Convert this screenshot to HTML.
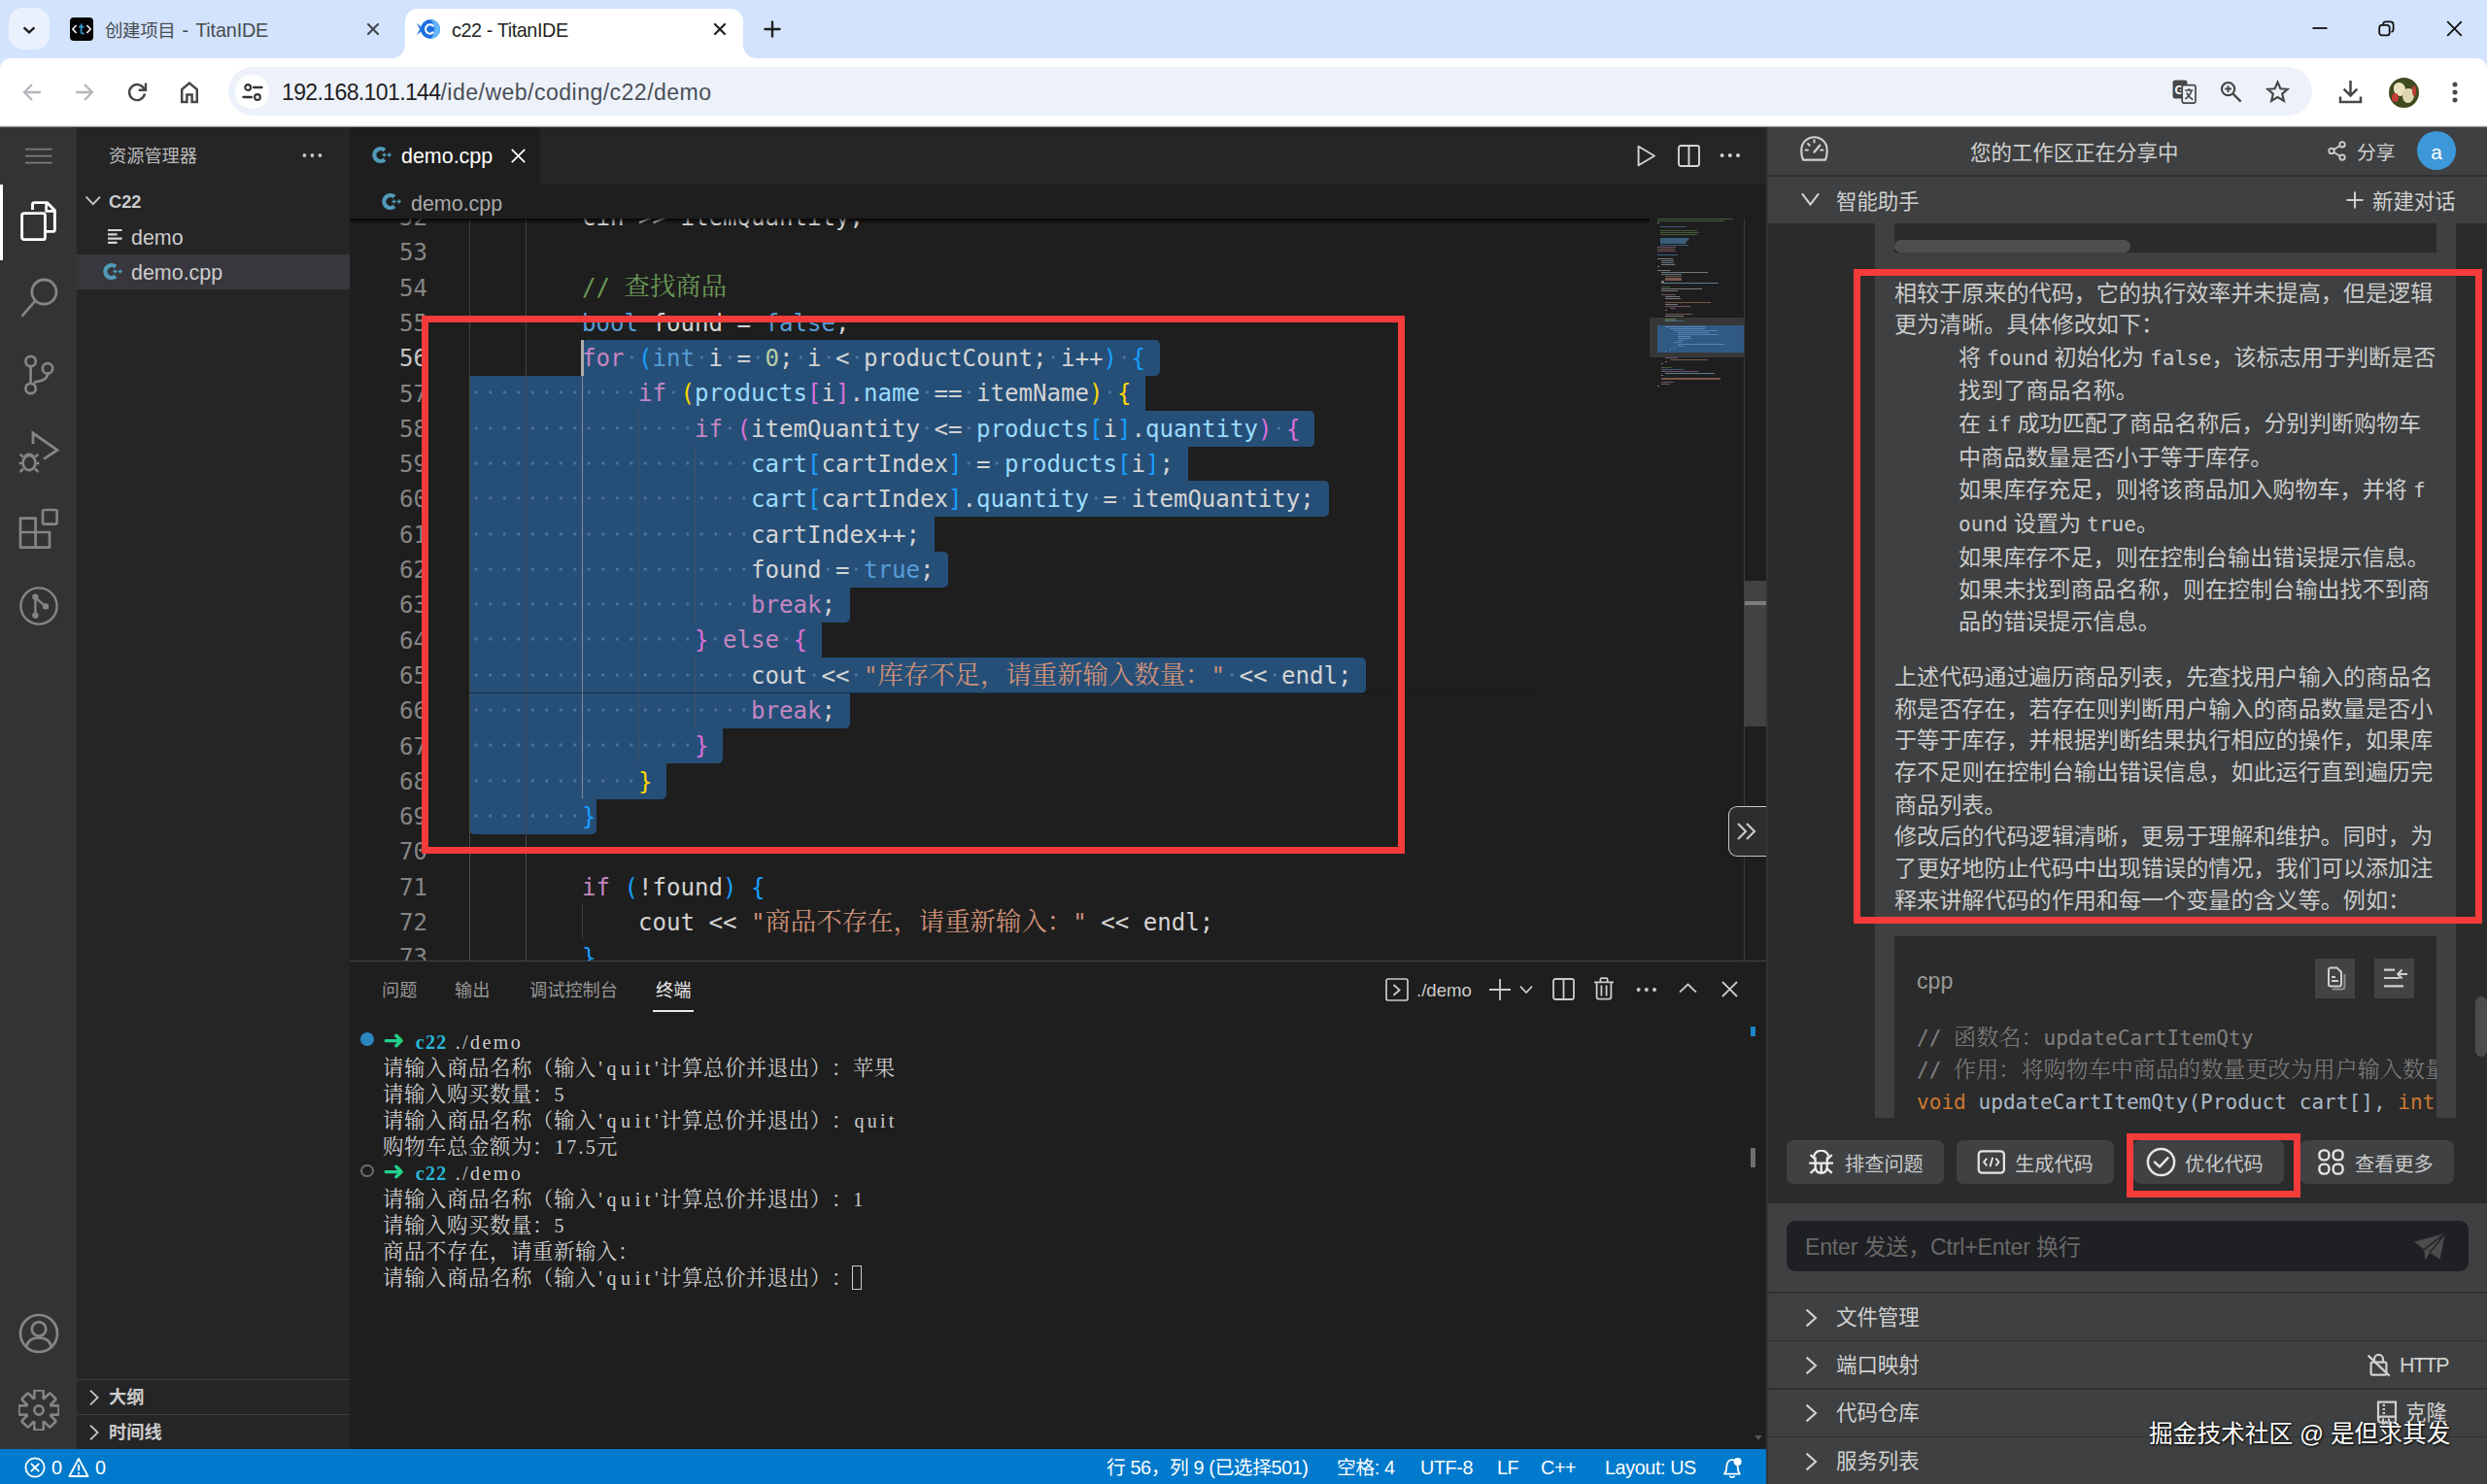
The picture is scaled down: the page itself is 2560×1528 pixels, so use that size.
<!DOCTYPE html>
<html lang="zh-CN"><head><meta charset="utf-8"><title>c22 - TitanIDE</title><style>
*{margin:0;padding:0;box-sizing:border-box;text-spacing-trim:space-all}
html,body{width:2560px;height:1528px;overflow:hidden;background:#d3e3fd}
body{position:relative;font-family:"Liberation Sans","Noto Sans CJK SC",sans-serif;-webkit-font-smoothing:antialiased}
.mono{font-family:"DejaVu Sans Mono","Liberation Mono","Noto Serif CJK SC",monospace}
.serif{font-family:"Liberation Serif","Noto Serif CJK SC",serif}
.abs{position:absolute}

#ed{position:absolute;left:360px;top:225px;width:1458px;height:764px;overflow:hidden;background:#1e1e1e}
.ln{position:absolute;left:0;margin-top:0.8px;height:36.3px;line-height:36.3px;white-space:pre;font-family:"DejaVu Sans Mono","Liberation Mono","Noto Serif CJK SC",monospace;font-size:24.08px;color:#d4d4d4}
.ln .cj{font-family:"Noto Serif CJK SC",serif;font-size:26.4px;line-height:1px}
.num{position:absolute;left:0;margin-top:1px;width:80px;text-align:right;height:36.3px;line-height:36.3px;font-family:"DejaVu Sans Mono","Liberation Mono","Noto Serif CJK SC",monospace;font-size:24.08px;color:#858585}
.k{color:#c586c0}.t{color:#569cd6}.v{color:#9cdcfe}.n{color:#b5cea8}.s{color:#ce9178}.c{color:#6a9955}
.b1{color:#ffd700}.b2{color:#da70d6}.b3{color:#179fff}
.ws{background-image:radial-gradient(circle at 50% 50%,#4d739c 0,#4d739c 1.25px,rgba(77,115,156,0) 2px);background-size:14.5px 100%;background-repeat:repeat-x;background-position:0 -1px}
.sel{position:absolute;background:#264f78;height:36.699999999999996px}
.ig{position:absolute;width:1px;background:#404040}
#mm i{position:absolute;height:1.2px;opacity:.5}

.tl{position:absolute;left:394px;height:27.0px;line-height:27.0px;white-space:pre;font-family:"Noto Serif CJK SC",serif;font-size:21.4px;letter-spacing:0.6px;color:#cccccc}
.tl b{font-weight:normal;font-family:"Liberation Serif","Noto Serif CJK SC",serif;font-size:20px}
.tl i{display:inline-block;font-style:normal;letter-spacing:0}

.ct{position:absolute;height:34px;line-height:34px;font-size:23.1px;color:#cbcbcb;white-space:nowrap;font-family:"Liberation Sans","Noto Sans CJK SC",sans-serif}
.ct code{font-family:"DejaVu Sans Mono","Liberation Mono","Noto Serif CJK SC",monospace;font-size:21.1px;margin:0 6px;line-height:1px}

.cb{position:absolute;left:23px;height:33px;line-height:33px;font-family:"DejaVu Sans Mono","Liberation Mono","Noto Serif CJK SC",monospace;font-size:21.1px;white-space:pre}
.cb .cj{font-family:"Noto Serif CJK SC",serif;font-size:23.1px;line-height:1px;font-weight:300}
</style></head><body>
<div id="chrome" style="position:absolute;left:0;top:0;width:2560px;height:131px;background:#d3e3fd">
<div style="position:absolute;left:9px;top:8px;width:42px;height:43px;background:#eaf1fd;border-radius:15px"></div>
<svg style="position:absolute;left:20px;top:21px;" width="20" height="20" viewBox="0 0 20 20" fill="none"><path d="M4.6 7.4 L10 12.4 L15.4 7.4" stroke="#1f1f1f" stroke-width="2.4" stroke-linecap="butt" stroke-linejoin="miter"/></svg>
<div style="position:absolute;left:72px;top:18px;width:24px;height:24px;background:#050505;border-radius:4px"></div>
<svg style="position:absolute;left:72px;top:18px;" width="24" height="24" viewBox="0 0 24 24" fill="none"><path d="M6.6 8 L2.8 12 L6.6 16 M17.4 8 L21.2 12 L17.4 16" stroke="#fff" stroke-width="1.5"/><path d="M11.6 6.6 V15 Q11.6 16.6 13.2 16.6 H14.4 M9.2 9.6 H14.4" stroke="#3aa3d8" stroke-width="1.6"/></svg>
<div style="position:absolute;left:108px;top:16.50px;height:28px;line-height:28px;font-size:19.8px;color:#474b50;white-space:nowrap;letter-spacing:-0.15px;word-spacing:1.8px"><span style="font-size:18.5px;letter-spacing:-0.4px">创建项目</span> - TitanIDE</div>
<svg style="position:absolute;left:376px;top:22px;" width="16" height="16" viewBox="0 0 16 16" fill="none"><path d="M3 3 L13 13 M13 3 L3 13" stroke="#45484d" stroke-width="2.2" stroke-linecap="round"/></svg>
<div style="position:absolute;left:417px;top:9px;width:348px;height:51px;background:#fff;border-radius:13px 13px 0 0"></div>
<div style="position:absolute;left:404px;top:47px;width:13px;height:13px;background:radial-gradient(circle at 0 0,rgba(255,255,255,0) 12.5px,#fff 13px)"></div>
<div style="position:absolute;left:765px;top:47px;width:13px;height:13px;background:radial-gradient(circle at 100% 0,rgba(255,255,255,0) 12.5px,#fff 13px)"></div>
<svg style="position:absolute;left:428px;top:18px;" width="26" height="24" viewBox="0 0 26 24" fill="none"><path d="M1 6 L9 12 L1 18 L4 12 Z" fill="#2b7de0"/><circle cx="15" cy="12" r="10" fill="#1f6fe0"/><path d="M15 2 A10 10 0 0 1 15 22 A14 14 0 0 0 15 2Z" fill="#63b5f7"/><path d="M17.8 8.6 A4.6 4.6 0 1 0 17.8 15.4" stroke="#fff" stroke-width="2.2" stroke-linecap="round"/></svg>
<div style="position:absolute;left:465px;top:16.50px;height:28px;line-height:28px;font-size:19.8px;color:#1f1f1f;white-space:nowrap;letter-spacing:-0.4px">c22 - TitanIDE</div>
<svg style="position:absolute;left:733px;top:22px;" width="16" height="16" viewBox="0 0 16 16" fill="none"><path d="M3 3 L13 13 M13 3 L3 13" stroke="#1f1f1f" stroke-width="2.2" stroke-linecap="round"/></svg>
<svg style="position:absolute;left:785px;top:20px;" width="20" height="20" viewBox="0 0 20 20" fill="none"><path d="M10 2.5 V17.5 M2.5 10 H17.5" stroke="#1f1f1f" stroke-width="2.4" stroke-linecap="round"/></svg>
<svg style="position:absolute;left:2380px;top:21px;" width="16" height="16" viewBox="0 0 16 16" fill="none"><path d="M0.5 8 H15.5" stroke="#111" stroke-width="1.8"/></svg>
<svg style="position:absolute;left:2448px;top:21px;" width="17" height="17" viewBox="0 0 17 17" fill="none"><rect x="1.2" y="4.8" width="10.5" height="10.5" rx="2.6" stroke="#111" stroke-width="1.8"/><path d="M5 3.8 C5.3 2.2 6.2 1.4 8 1.4 H12.4 C14.6 1.4 15.6 2.6 15.6 4.6 V9 C15.6 10.8 15 11.6 13.4 12" stroke="#111" stroke-width="1.8"/></svg>
<svg style="position:absolute;left:2518px;top:21px;" width="17" height="17" viewBox="0 0 17 17" fill="none"><path d="M1.2 1.2 L15.8 15.8 M15.8 1.2 L1.2 15.8" stroke="#111" stroke-width="1.8"/></svg>
<div style="position:absolute;left:0px;top:60px;width:2560px;height:69px;background:#fff;border-radius:11px 11px 0 0"></div>
<div style="position:absolute;left:0px;top:129px;width:2560px;height:1px;background:#e3e3e3;"></div>
<div style="position:absolute;left:0px;top:130px;width:2560px;height:1px;background:#9a9a9a;"></div>
<svg style="position:absolute;left:21px;top:83px;" width="24" height="24" viewBox="0 0 24 24" fill="none"><path d="M21 12 H4.5 M12 4 L4 12 L12 20" stroke="#b4b6ba" stroke-width="2.3" stroke-linejoin="miter"/></svg>
<svg style="position:absolute;left:75px;top:83px;" width="24" height="24" viewBox="0 0 24 24" fill="none"><path d="M3 12 H19.5 M12 4 L20 12 L12 20" stroke="#b4b6ba" stroke-width="2.3"/></svg>
<svg style="position:absolute;left:129px;top:82px;" width="24" height="25" viewBox="0 0 24 25" fill="none"><path d="M19.6 10.2 A8 8 0 1 0 20 14.6" stroke="#474747" stroke-width="2.4"/><path d="M21 3.5 V10.8 H13.7" stroke="#474747" stroke-width="2.4" stroke-linejoin="miter" fill="none"/></svg>
<svg style="position:absolute;left:183px;top:82px;" width="24" height="25" viewBox="0 0 24 25" fill="none"><path d="M4.2 23 V10 L12 3.6 L19.8 10 V23 H14.6 V15.6 H9.4 V23 Z" stroke="#474747" stroke-width="2.5" stroke-linejoin="miter"/></svg>
<div style="position:absolute;left:235px;top:69px;width:2145px;height:50px;background:#edf2fa;border-radius:25px"></div>
<div style="position:absolute;left:242px;top:77px;width:35px;height:35px;border-radius:50%;background:#fff"></div>
<svg style="position:absolute;left:248px;top:83px;" width="24" height="24" viewBox="0 0 24 24" fill="none"><circle cx="7.2" cy="7" r="2.9" stroke="#333" stroke-width="2.1"/><path d="M13 7 H21.5" stroke="#333" stroke-width="2.3" stroke-linecap="round"/><circle cx="17" cy="17" r="2.9" stroke="#333" stroke-width="2.1"/><path d="M2.5 17 H11" stroke="#333" stroke-width="2.3" stroke-linecap="round"/></svg>
<div class="url" style="position:absolute;left:290px;top:78.50px;height:32px;line-height:32px;font-size:23.1px;color:#1f1f1f;white-space:nowrap;letter-spacing:-0.66px"><span style="color:#1f1f1f">192.168.101.144</span><span style="color:#4a4f57;letter-spacing:0.45px">/ide/web/coding/c22/demo</span></div>
<svg style="position:absolute;left:2236px;top:82px;" width="25" height="25" viewBox="0 0 25 25" fill="none"><rect x="0.5" y="0.5" width="15" height="19" rx="2.5" fill="#474747"/><text x="2.6" y="14.6" font-size="12.5" font-weight="bold" fill="#fff" font-family="Liberation Sans,sans-serif">G</text><rect x="10.2" y="5.6" width="13.8" height="18.6" rx="2.2" fill="#edf2fa" stroke="#474747" stroke-width="1.7"/><path d="M13 11 H21.4 M17.2 9 V11 M19.8 11 C19 15 16 18.4 13.2 20 M14.8 13.4 C16 16.4 18.6 19 21.4 20.6" stroke="#474747" stroke-width="1.5"/></svg>
<svg style="position:absolute;left:2285px;top:83px;" width="23" height="23" viewBox="0 0 23 23" fill="none"><circle cx="8.6" cy="8.6" r="6.6" stroke="#474747" stroke-width="2.2"/><path d="M13.6 13.6 L21.6 21.6" stroke="#474747" stroke-width="2.4"/><path d="M8.6 5.2 V12 M5.2 8.6 H12" stroke="#474747" stroke-width="2"/></svg>
<svg style="position:absolute;left:2332px;top:82px;" width="25" height="24" viewBox="0 0 25 24" fill="none"><path d="M12.5 2.6 L15.4 9.3 L22.7 9.9 L17.2 14.7 L18.9 21.8 L12.5 18 L6.1 21.8 L7.8 14.7 L2.3 9.9 L9.6 9.3 Z" stroke="#474747" stroke-width="2.2" stroke-linejoin="miter"/></svg>
<svg style="position:absolute;left:2407px;top:82px;" width="25" height="25" viewBox="0 0 25 25" fill="none"><path d="M12.5 1 V16 M5.6 9.6 L12.5 16.4 L19.4 9.6" stroke="#474747" stroke-width="2.5"/><path d="M2 17.6 V23 H23 V17.6" stroke="#474747" stroke-width="2.5"/></svg>
<div style="position:absolute;left:2458.5px;top:79.5px;width:31px;height:31px;border-radius:50%;background:#3f4a1f;overflow:hidden"><div style="position:absolute;left:5px;top:5px;width:12px;height:14px;border-radius:45% 45% 50% 50%;background:#e9e2bd;transform:rotate(-14deg)"></div><div style="position:absolute;left:14px;top:11px;width:12px;height:15px;border-radius:45% 45% 50% 50%;background:#ddd6ae;transform:rotate(10deg)"></div><div style="position:absolute;left:3px;top:16px;width:7px;height:9px;border-radius:50%;background:#c23b36"></div><div style="position:absolute;left:24px;top:8px;width:4px;height:11px;border-radius:50%;background:#c23b36"></div></div>
<svg style="position:absolute;left:2522px;top:82px;" width="10" height="26" viewBox="0 0 10 26" fill="none"><circle cx="5" cy="5" r="2.5" fill="#474747"/><circle cx="5" cy="13" r="2.5" fill="#474747"/><circle cx="5" cy="21" r="2.5" fill="#474747"/></svg>
</div>
<div style="position:absolute;left:0px;top:131px;width:2560px;height:1397px;background:#1e1e1e;"></div>
<div style="position:absolute;left:0px;top:131px;width:79px;height:1361px;background:#333333;"></div>
<svg style="position:absolute;left:26px;top:150px;" width="28" height="22" viewBox="0 0 28 22" fill="none"><path d="M0 3.6 H27.5 M0 10.6 H27.5 M0 17.6 H27.5" stroke="#7c7c7c" stroke-width="1.7"/></svg>
<div style="position:absolute;left:0px;top:190px;width:3px;height:78px;background:#ffffff;"></div>
<svg style="position:absolute;left:20px;top:206px;" width="40" height="44" viewBox="0 0 40 44" fill="none"><path d="M13.5 10 V4.6 Q13.5 2.6 15.5 2.6 H28.4 L36.4 10.6 V30.4 Q36.4 32.4 34.4 32.4 H26.6" stroke="#fff" stroke-width="2.9" stroke-linejoin="round"/><path d="M27.6 3 V11.4 H36" stroke="#fff" stroke-width="2.6"/><rect x="2.6" y="13.6" width="23.8" height="27" rx="2.2" stroke="#fff" stroke-width="2.9"/></svg>
<svg style="position:absolute;left:20px;top:285px;" width="42" height="44" viewBox="0 0 42 44" fill="none"><circle cx="25.4" cy="15.6" r="12.6" stroke="#858585" stroke-width="2.8"/><path d="M16.4 24.6 L2.6 40.6" stroke="#858585" stroke-width="2.8"/></svg>
<svg style="position:absolute;left:22px;top:364px;" width="36" height="44" viewBox="0 0 36 44" fill="none"><circle cx="9.6" cy="8" r="5.2" stroke="#858585" stroke-width="2.7"/><circle cx="9.6" cy="36" r="5.2" stroke="#858585" stroke-width="2.7"/><circle cx="27" cy="15.4" r="5.2" stroke="#858585" stroke-width="2.7"/><path d="M9.6 13.2 V30.8 M27 20.6 C27 27 20 28.4 13 29.6" stroke="#858585" stroke-width="2.7"/></svg>
<svg style="position:absolute;left:18px;top:443px;" width="44" height="46" viewBox="0 0 44 46" fill="none"><path d="M16 14 V3 L41 20.4 L27 29.6" stroke="#858585" stroke-width="2.8" stroke-linejoin="miter"/><ellipse cx="12" cy="33.6" rx="6.4" ry="7.6" stroke="#858585" stroke-width="2.7"/><path d="M6 27.6 L2.6 24.6 M18 27.6 L21.4 24.6 M1.6 34 H5.6 M18.4 34 H22.4 M6 39.6 L2.6 43 M18 39.6 L21.4 43 M7.4 27 Q12 22.8 16.6 27" stroke="#858585" stroke-width="2.5"/></svg>
<svg style="position:absolute;left:19px;top:523px;" width="42" height="42" viewBox="0 0 42 42" fill="none"><path d="M2 10.6 H17.6 V25 H32 V40.6 H2 Z M2 25 H17.6 V40.6" stroke="#858585" stroke-width="2.7" stroke-linejoin="round"/><rect x="25" y="2" width="14.6" height="14.6" rx="1.5" stroke="#858585" stroke-width="2.7"/></svg>
<svg style="position:absolute;left:19px;top:603px;" width="42" height="42" viewBox="0 0 42 42" fill="none"><circle cx="21" cy="21" r="18.6" stroke="#858585" stroke-width="2.4"/><circle cx="17.4" cy="11.6" r="3.2" fill="#858585"/><circle cx="17.4" cy="30.6" r="3.2" fill="#858585"/><circle cx="28" cy="21.4" r="3.2" fill="#858585"/><path d="M17.4 12 V30 M18 13 L28 21.4" stroke="#858585" stroke-width="2.4"/></svg>
<svg style="position:absolute;left:19px;top:1352px;" width="42" height="42" viewBox="0 0 42 42" fill="none"><circle cx="21" cy="21" r="19" stroke="#858585" stroke-width="2.7"/><circle cx="21" cy="16.4" r="7.2" stroke="#858585" stroke-width="2.7"/><path d="M8 34.6 C10 27.4 15 25.4 21 25.4 C27 25.4 32 27.4 34 34.6" stroke="#858585" stroke-width="2.7"/></svg>
<svg style="position:absolute;left:19px;top:1431px;" width="42" height="42" viewBox="0 0 42 42" fill="none"><g transform="translate(21,21)"><rect x="-4.6" y="-20.6" width="9.2" height="11" rx="1" transform="rotate(0)" stroke="#858585" stroke-width="2.6" fill="#333"/><rect x="-4.6" y="-20.6" width="9.2" height="11" rx="1" transform="rotate(45)" stroke="#858585" stroke-width="2.6" fill="#333"/><rect x="-4.6" y="-20.6" width="9.2" height="11" rx="1" transform="rotate(90)" stroke="#858585" stroke-width="2.6" fill="#333"/><rect x="-4.6" y="-20.6" width="9.2" height="11" rx="1" transform="rotate(135)" stroke="#858585" stroke-width="2.6" fill="#333"/><rect x="-4.6" y="-20.6" width="9.2" height="11" rx="1" transform="rotate(180)" stroke="#858585" stroke-width="2.6" fill="#333"/><rect x="-4.6" y="-20.6" width="9.2" height="11" rx="1" transform="rotate(225)" stroke="#858585" stroke-width="2.6" fill="#333"/><rect x="-4.6" y="-20.6" width="9.2" height="11" rx="1" transform="rotate(270)" stroke="#858585" stroke-width="2.6" fill="#333"/><rect x="-4.6" y="-20.6" width="9.2" height="11" rx="1" transform="rotate(315)" stroke="#858585" stroke-width="2.6" fill="#333"/><circle r="13.4" fill="#333" stroke="#858585" stroke-width="2.6"/><rect x="-3.3" y="-17" width="6.6" height="7" transform="rotate(0)" fill="#333"/><rect x="-3.3" y="-17" width="6.6" height="7" transform="rotate(45)" fill="#333"/><rect x="-3.3" y="-17" width="6.6" height="7" transform="rotate(90)" fill="#333"/><rect x="-3.3" y="-17" width="6.6" height="7" transform="rotate(135)" fill="#333"/><rect x="-3.3" y="-17" width="6.6" height="7" transform="rotate(180)" fill="#333"/><rect x="-3.3" y="-17" width="6.6" height="7" transform="rotate(225)" fill="#333"/><rect x="-3.3" y="-17" width="6.6" height="7" transform="rotate(270)" fill="#333"/><rect x="-3.3" y="-17" width="6.6" height="7" transform="rotate(315)" fill="#333"/><circle r="4.6" stroke="#858585" stroke-width="2.6"/></g></svg>
<div style="position:absolute;left:79px;top:131px;width:281px;height:1361px;background:#252526;"></div>
<div style="position:absolute;left:112px;top:149.30px;height:25px;line-height:25px;font-size:18.2px;color:#bbbbbb;white-space:nowrap;">资源管理器</div>
<svg style="position:absolute;left:311px;top:157px;" width="21" height="6" viewBox="0 0 21 6" fill="none"><circle cx="2.4" cy="3" r="1.9" fill="#c5c5c5"/><circle cx="10.4" cy="3" r="1.9" fill="#c5c5c5"/><circle cx="18.4" cy="3" r="1.9" fill="#c5c5c5"/></svg>
<svg style="position:absolute;left:87px;top:199px;" width="18" height="16" viewBox="0 0 18 16" fill="none"><path d="M1.6 3.6 L8.8 11.2 L16 3.6" stroke="#c5c5c5" stroke-width="1.9"/></svg>
<div style="position:absolute;left:112px;top:196.30px;height:25px;line-height:25px;font-size:18.2px;color:#cccccc;white-space:nowrap;font-weight:bold">C22</div>
<svg style="position:absolute;left:111px;top:235px;" width="16" height="17" viewBox="0 0 16 17" fill="none"><path d="M0 2 H14.6 M0 6.3 H9.6 M0 10.6 H14.6 M0 14.9 H9.6" stroke="#d4d4d4" stroke-width="2.2"/></svg>
<div style="position:absolute;left:135px;top:230.30px;height:30px;line-height:30px;font-size:21.45px;color:#cccccc;white-space:nowrap;">demo</div>
<div style="position:absolute;left:79px;top:262px;width:281px;height:36px;background:#37373d;"></div>
<svg style="position:absolute;left:106px;top:270px;" width="21" height="19" viewBox="0 0 21 19" fill="none"><path d="M13 4.7 A6.4 6.4 0 1 0 13 14.3" stroke="#519aba" stroke-width="4.3"/><path d="M10.4 9.5 H14.6 M12.5 7.4 V11.6 M15.6 9.5 H19.8 M17.7 7.4 V11.6" stroke="#519aba" stroke-width="1.5"/></svg>
<div style="position:absolute;left:135px;top:266.30px;height:30px;line-height:30px;font-size:21.45px;color:#cccccc;white-space:nowrap;">demo.cpp</div>
<div style="position:absolute;left:79px;top:1420px;width:281px;height:1px;background:#3c3c3c;"></div>
<div style="position:absolute;left:79px;top:1456px;width:281px;height:1px;background:#3c3c3c;"></div>
<svg style="position:absolute;left:91px;top:1430px;" width="12" height="18" viewBox="0 0 12 18" fill="none"><path d="M2 1.6 L9.6 9 L2 16.4" stroke="#c5c5c5" stroke-width="1.8"/></svg>
<div style="position:absolute;left:112px;top:1426.50px;height:25px;line-height:25px;font-size:18.2px;color:#cccccc;white-space:nowrap;font-weight:bold">大纲</div>
<svg style="position:absolute;left:91px;top:1466px;" width="12" height="18" viewBox="0 0 12 18" fill="none"><path d="M2 1.6 L9.6 9 L2 16.4" stroke="#c5c5c5" stroke-width="1.8"/></svg>
<div style="position:absolute;left:112px;top:1462.50px;height:25px;line-height:25px;font-size:18.2px;color:#cccccc;white-space:nowrap;font-weight:bold">时间线</div>
<div style="position:absolute;left:0px;top:1492px;width:1818px;height:36px;background:#007acc;"></div>
<svg style="position:absolute;left:25px;top:1500px;" width="22" height="22" viewBox="0 0 22 22" fill="none"><circle cx="11" cy="11" r="9.6" stroke="#fff" stroke-width="1.8"/><path d="M6.8 6.8 L15.2 15.2 M15.2 6.8 L6.8 15.2" stroke="#fff" stroke-width="1.8"/></svg>
<div style="position:absolute;left:53px;top:1496.50px;height:28px;line-height:28px;font-size:19.8px;color:#fff;white-space:nowrap;">0</div>
<svg style="position:absolute;left:70px;top:1500px;" width="22" height="22" viewBox="0 0 22 22" fill="none"><path d="M11 2 L20.6 20 H1.4 Z" stroke="#fff" stroke-width="1.8" stroke-linejoin="round"/><path d="M11 8 V14.2 M11 16 V18.2" stroke="#fff" stroke-width="1.9"/></svg>
<div style="position:absolute;left:98px;top:1496.50px;height:28px;line-height:28px;font-size:19.8px;color:#fff;white-space:nowrap;">0</div>
<div class="st" style="position:absolute;left:1139px;top:1496.80px;height:28px;line-height:28px;font-size:19.8px;color:#fff;white-space:nowrap;letter-spacing:-0.4px">行 56，列 9 (已选择501)</div>
<div class="st" style="position:absolute;left:1376px;top:1496.80px;height:28px;line-height:28px;font-size:19.8px;color:#fff;white-space:nowrap;letter-spacing:-0.4px">空格: 4</div>
<div class="st" style="position:absolute;left:1462px;top:1496.80px;height:28px;line-height:28px;font-size:19.8px;color:#fff;white-space:nowrap;letter-spacing:-0.4px">UTF-8</div>
<div class="st" style="position:absolute;left:1541px;top:1496.80px;height:28px;line-height:28px;font-size:19.8px;color:#fff;white-space:nowrap;letter-spacing:-0.4px">LF</div>
<div class="st" style="position:absolute;left:1586px;top:1496.80px;height:28px;line-height:28px;font-size:19.8px;color:#fff;white-space:nowrap;letter-spacing:-0.4px">C++</div>
<div class="st" style="position:absolute;left:1652px;top:1496.80px;height:28px;line-height:28px;font-size:19.8px;color:#fff;white-space:nowrap;letter-spacing:-0.4px">Layout: US</div>
<svg style="position:absolute;left:1772px;top:1500px;" width="22" height="23" viewBox="0 0 22 23" fill="none"><path d="M3 17.6 H19 C16.6 15.6 17 12.6 16.6 9.4 C16.2 5.6 14 3.2 11 3.2 C8 3.2 5.8 5.6 5.4 9.4 C5 12.6 5.4 15.6 3 17.6 Z" stroke="#fff" stroke-width="1.8" stroke-linejoin="round"/><path d="M8.6 19.6 C9 21.6 13 21.6 13.4 19.6" stroke="#fff" stroke-width="1.8"/><circle cx="16.6" cy="5" r="4" fill="#fff"/></svg>
<div style="position:absolute;left:360px;top:131px;width:1458px;height:59px;background:#252526;"></div>
<div style="position:absolute;left:360px;top:131px;width:196px;height:59px;background:#1e1e1e;"></div>
<svg style="position:absolute;left:383px;top:150px;" width="21" height="19" viewBox="0 0 21 19" fill="none"><path d="M13 4.7 A6.4 6.4 0 1 0 13 14.3" stroke="#519aba" stroke-width="4.3"/><path d="M10.4 9.5 H14.6 M12.5 7.4 V11.6 M15.6 9.5 H19.8 M17.7 7.4 V11.6" stroke="#519aba" stroke-width="1.5"/></svg>
<div style="position:absolute;left:413px;top:146.00px;height:30px;line-height:30px;font-size:21.45px;color:#ffffff;white-space:nowrap;">demo.cpp</div>
<svg style="position:absolute;left:526px;top:153px;" width="15" height="15" viewBox="0 0 15 15" fill="none"><path d="M0.8 0.8 L14.2 14.2 M14.2 0.8 L0.8 14.2" stroke="#fff" stroke-width="1.7"/></svg>
<svg style="position:absolute;left:1685px;top:149px;" width="20" height="23" viewBox="0 0 20 23" fill="none"><path d="M1.6 1.8 L18 11.5 L1.6 21.2 Z" stroke="#d4d4d4" stroke-width="1.9" stroke-linejoin="round"/></svg>
<svg style="position:absolute;left:1727px;top:149px;" width="23" height="23" viewBox="0 0 23 23" fill="none"><rect x="1" y="1" width="21" height="21" rx="2.2" stroke="#d4d4d4" stroke-width="1.9"/><path d="M11.5 1 V22" stroke="#d4d4d4" stroke-width="1.9"/></svg>
<svg style="position:absolute;left:1770px;top:157px;" width="22" height="6" viewBox="0 0 22 6" fill="none"><circle cx="2.6" cy="3" r="2" fill="#d4d4d4"/><circle cx="10.8" cy="3" r="2" fill="#d4d4d4"/><circle cx="19" cy="3" r="2" fill="#d4d4d4"/></svg>
<div style="position:absolute;left:360px;top:190px;width:1458px;height:35px;background:#1e1e1e;"></div>
<svg style="position:absolute;left:393px;top:198px;" width="21" height="19" viewBox="0 0 21 19" fill="none"><path d="M13 4.7 A6.4 6.4 0 1 0 13 14.3" stroke="#519aba" stroke-width="4.3"/><path d="M10.4 9.5 H14.6 M12.5 7.4 V11.6 M15.6 9.5 H19.8 M17.7 7.4 V11.6" stroke="#519aba" stroke-width="1.5"/></svg>
<div style="position:absolute;left:423px;top:194.60px;height:30px;line-height:30px;font-size:21.45px;color:#a9a9a9;white-space:nowrap;">demo.cpp</div>
<div id="ed"><div class="sel" style="left:239.0px;top:125.25px;width:594.5px;border-radius:5px 5px 5px 0px"></div><div class="sel" style="left:123.0px;top:161.55px;width:696.0px;border-radius:0px 0px 0px 0px"></div><div class="sel" style="left:123.0px;top:197.85px;width:870.0px;border-radius:0px 5px 5px 0px"></div><div class="sel" style="left:123.0px;top:234.15px;width:739.5px;border-radius:0px 0px 0px 0px"></div><div class="sel" style="left:123.0px;top:270.45px;width:884.5px;border-radius:0px 5px 5px 0px"></div><div class="sel" style="left:123.0px;top:306.75px;width:478.5px;border-radius:0px 0px 0px 0px"></div><div class="sel" style="left:123.0px;top:343.05px;width:493.0px;border-radius:0px 5px 5px 0px"></div><div class="sel" style="left:123.0px;top:379.35px;width:391.5px;border-radius:0px 0px 5px 0px"></div><div class="sel" style="left:123.0px;top:415.65px;width:362.5px;border-radius:0px 0px 0px 0px"></div><div class="sel" style="left:123.0px;top:451.95px;width:923.2px;border-radius:0px 5px 5px 0px"></div><div class="sel" style="left:123.0px;top:488.25px;width:391.5px;border-radius:0px 0px 5px 0px"></div><div class="sel" style="left:123.0px;top:524.55px;width:261.0px;border-radius:0px 0px 5px 0px"></div><div class="sel" style="left:123.0px;top:560.85px;width:203.0px;border-radius:0px 0px 5px 0px"></div><div class="sel" style="left:123.0px;top:597.15px;width:130.5px;border-radius:0px 0px 5px 5px"></div><div class="ig" style="left:123.0px;top:-19.95px;height:145.20px;background:#404040"></div><div class="ig" style="left:181.0px;top:-19.95px;height:145.20px;background:#404040"></div><div class="ig" style="left:123.0px;top:161.55px;height:617.10px;background:#4a4a4a"></div><div class="ig" style="left:181.0px;top:161.55px;height:617.10px;background:#4a4a4a"></div><div class="ig" style="left:239.0px;top:161.55px;height:435.60px;background:#8a8a8a"></div><div class="ig" style="left:297.0px;top:197.85px;height:363.00px;background:#3f5168"></div><div class="ig" style="left:355.0px;top:234.15px;height:181.50px;background:#3f5168"></div><div class="ig" style="left:355.0px;top:451.95px;height:72.60px;background:#3f5168"></div><div class="ig" style="left:239.0px;top:706.05px;height:36.30px;background:#404040"></div><div class="ig" style="left:123.0px;top:125.25px;height:36.30px;background:#404040"></div><div class="ig" style="left:181.0px;top:125.25px;height:36.30px;background:#404040"></div><div style="position:absolute;left:238.0px;top:125.25px;width:3px;height:36.3px;background:#aeafad"></div><div style="position:absolute;left:123px;top:487.75px;width:1100px;height:1px;background:rgba(20,20,20,.55)"></div><div class="num" style="top:-19.95px;color:#858585">52</div><div class="ln" style="left:239.0px;top:-19.95px">cin &gt;&gt; itemQuantity;</div><div class="num" style="top:16.35px;color:#858585">53</div><div class="num" style="top:52.65px;color:#858585">54</div><div class="ln" style="left:239.0px;top:52.65px"><span class="c">// <span class="cj">查找商品</span></span></div><div class="num" style="top:88.95px;color:#858585">55</div><div class="ln" style="left:239.0px;top:88.95px"><span class="t">bool</span> found = <span class="t">false</span>;</div><div class="num" style="top:125.25px;color:#c6c6c6">56</div><div class="ln" style="left:239.0px;top:125.25px"><span class="k">for</span><span class="ws"> </span><span class="b3">(</span><span class="t">int</span><span class="ws"> </span>i<span class="ws"> </span>=<span class="ws"> </span><span class="n">0</span>;<span class="ws"> </span>i<span class="ws"> </span>&lt;<span class="ws"> </span>productCount;<span class="ws"> </span>i++<span class="b3">)</span><span class="ws"> </span><span class="b3">{</span></div><div class="num" style="top:161.55px;color:#858585">57</div><div class="ln" style="left:123.0px;top:161.55px"><span class="ws">            </span><span class="k">if</span><span class="ws"> </span><span class="b1">(</span><span class="v">products</span><span class="b2">[</span>i<span class="b2">]</span>.<span class="v">name</span><span class="ws"> </span>==<span class="ws"> </span>itemName<span class="b1">)</span><span class="ws"> </span><span class="b1">{</span></div><div class="num" style="top:197.85px;color:#858585">58</div><div class="ln" style="left:123.0px;top:197.85px"><span class="ws">                </span><span class="k">if</span><span class="ws"> </span><span class="b2">(</span>itemQuantity<span class="ws"> </span>&lt;=<span class="ws"> </span><span class="v">products</span><span class="b3">[</span>i<span class="b3">]</span>.<span class="v">quantity</span><span class="b2">)</span><span class="ws"> </span><span class="b2">{</span></div><div class="num" style="top:234.15px;color:#858585">59</div><div class="ln" style="left:123.0px;top:234.15px"><span class="ws">                    </span><span class="v">cart</span><span class="b3">[</span>cartIndex<span class="b3">]</span><span class="ws"> </span>=<span class="ws"> </span><span class="v">products</span><span class="b3">[</span>i<span class="b3">]</span>;</div><div class="num" style="top:270.45px;color:#858585">60</div><div class="ln" style="left:123.0px;top:270.45px"><span class="ws">                    </span><span class="v">cart</span><span class="b3">[</span>cartIndex<span class="b3">]</span>.<span class="v">quantity</span><span class="ws"> </span>=<span class="ws"> </span>itemQuantity;</div><div class="num" style="top:306.75px;color:#858585">61</div><div class="ln" style="left:123.0px;top:306.75px"><span class="ws">                    </span>cartIndex++;</div><div class="num" style="top:343.05px;color:#858585">62</div><div class="ln" style="left:123.0px;top:343.05px"><span class="ws">                    </span>found<span class="ws"> </span>=<span class="ws"> </span><span class="t">true</span>;</div><div class="num" style="top:379.35px;color:#858585">63</div><div class="ln" style="left:123.0px;top:379.35px"><span class="ws">                    </span><span class="k">break</span>;</div><div class="num" style="top:415.65px;color:#858585">64</div><div class="ln" style="left:123.0px;top:415.65px"><span class="ws">                </span><span class="b2">}</span><span class="ws"> </span><span class="k">else</span><span class="ws"> </span><span class="b2">{</span></div><div class="num" style="top:451.95px;color:#858585">65</div><div class="ln" style="left:123.0px;top:451.95px"><span class="ws">                    </span>cout<span class="ws"> </span>&lt;&lt;<span class="ws"> </span><span class="s">"<span class="cj">库存不足，请重新输入数量：</span>"</span><span class="ws"> </span>&lt;&lt;<span class="ws"> </span>endl;</div><div class="num" style="top:488.25px;color:#858585">66</div><div class="ln" style="left:123.0px;top:488.25px"><span class="ws">                    </span><span class="k">break</span>;</div><div class="num" style="top:524.55px;color:#858585">67</div><div class="ln" style="left:123.0px;top:524.55px"><span class="ws">                </span><span class="b2">}</span></div><div class="num" style="top:560.85px;color:#858585">68</div><div class="ln" style="left:123.0px;top:560.85px"><span class="ws">            </span><span class="b1">}</span></div><div class="num" style="top:597.15px;color:#858585">69</div><div class="ln" style="left:123.0px;top:597.15px"><span class="ws">        </span><span class="b3">}</span></div><div class="num" style="top:633.45px;color:#858585">70</div><div class="num" style="top:669.75px;color:#858585">71</div><div class="ln" style="left:239.0px;top:669.75px"><span class="k">if</span> <span class="b3">(</span>!found<span class="b3">)</span> <span class="b3">{</span></div><div class="num" style="top:706.05px;color:#858585">72</div><div class="ln" style="left:297.0px;top:706.05px">cout &lt;&lt; <span class="s">"<span class="cj">商品不存在，请重新输入：</span>"</span> &lt;&lt; endl;</div><div class="num" style="top:742.35px;color:#858585">73</div><div class="ln" style="left:239.0px;top:742.35px"><span class="b3">}</span></div><div style="position:absolute;left:0;top:0;width:1338px;height:6px;background:linear-gradient(rgba(0,0,0,.75),rgba(0,0,0,0))"></div><div id="mm" style="position:absolute;left:1338px;top:0;width:97px;height:764px;overflow:hidden"><div style="position:absolute;left:0;top:102px;width:97px;height:41px;background:rgba(121,121,121,.28)"></div><div style="position:absolute;left:8px;top:110px;width:89px;height:28px;background:#2f5f92;opacity:.85"></div><i style="left:8.0px;top:0.0px;width:77.7px;background:#6a9955"></i><i style="left:8.0px;top:1.9px;width:69.3px;background:#6a9955"></i><i style="left:8.0px;top:3.9px;width:2.1px;background:#d4d4d4"></i><i style="left:11.2px;top:7.8px;width:27.3px;background:#569cd6"></i><i style="left:11.2px;top:11.7px;width:37.8px;background:#6a9955"></i><i style="left:11.2px;top:13.6px;width:39.9px;background:#6a9955"></i><i style="left:11.2px;top:15.6px;width:37.8px;background:#6a9955"></i><i style="left:11.2px;top:19.5px;width:29.4px;background:#569cd6"></i><i style="left:11.2px;top:21.4px;width:28.4px;background:#569cd6"></i><i style="left:11.2px;top:23.4px;width:27.3px;background:#569cd6"></i><i style="left:11.2px;top:25.3px;width:26.2px;background:#569cd6"></i><i style="left:11.2px;top:27.3px;width:28.4px;background:#569cd6"></i><i style="left:8.0px;top:29.2px;width:18.9px;background:#c586c0"></i><i style="left:8.0px;top:31.2px;width:17.9px;background:#ce9178"></i><i style="left:8.0px;top:33.1px;width:18.9px;background:#c586c0"></i><i style="left:8.0px;top:37.0px;width:21.0px;background:#569cd6"></i><i style="left:8.0px;top:41.0px;width:15.8px;background:#d4d4d4"></i><i style="left:12.2px;top:42.9px;width:12.6px;background:#d4d4d4"></i><i style="left:12.2px;top:44.9px;width:12.6px;background:#9cdcfe"></i><i style="left:12.2px;top:46.8px;width:13.7px;background:#d4d4d4"></i><i style="left:8.0px;top:48.8px;width:2.1px;background:#d4d4d4"></i><i style="left:8.0px;top:52.7px;width:12.6px;background:#d4d4d4"></i><i style="left:12.2px;top:54.6px;width:48.3px;background:#d4d4d4"></i><i style="left:12.2px;top:56.6px;width:21.0px;background:#9cdcfe"></i><i style="left:16.4px;top:58.5px;width:16.8px;background:#ce9178"></i><i style="left:16.4px;top:60.5px;width:16.8px;background:#ce9178"></i><i style="left:16.4px;top:62.4px;width:16.8px;background:#ce9178"></i><i style="left:12.2px;top:64.4px;width:3.2px;background:#d4d4d4"></i><i style="left:12.2px;top:66.3px;width:58.8px;background:#9cdcfe"></i><i style="left:12.2px;top:70.2px;width:8.4px;background:#6a9955"></i><i style="left:12.2px;top:72.2px;width:42.0px;background:#d4d4d4"></i><i style="left:12.2px;top:74.1px;width:16.8px;background:#d4d4d4"></i><i style="left:12.2px;top:78.0px;width:14.7px;background:#c586c0"></i><i style="left:16.4px;top:80.0px;width:14.7px;background:#d4d4d4"></i><i style="left:16.4px;top:81.9px;width:15.8px;background:#d4d4d4"></i><i style="left:16.4px;top:85.8px;width:46.2px;background:#ce9178"></i><i style="left:16.4px;top:87.8px;width:12.6px;background:#d4d4d4"></i><i style="left:16.4px;top:89.7px;width:25.2px;background:#c586c0"></i><i style="left:20.6px;top:91.7px;width:6.3px;background:#c586c0"></i><i style="left:16.4px;top:93.6px;width:2.1px;background:#d4d4d4"></i><i style="left:16.4px;top:97.5px;width:27.3px;background:#ce9178"></i><i style="left:16.4px;top:99.5px;width:18.9px;background:#d4d4d4"></i><i style="left:16.4px;top:103.4px;width:10.5px;background:#6a9955"></i><i style="left:16.4px;top:105.3px;width:18.9px;background:#569cd6"></i><i style="left:16.4px;top:142.9px;width:12.6px;background:#c586c0"></i><i style="left:20.6px;top:144.9px;width:39.9px;background:#ce9178"></i><i style="left:16.4px;top:146.8px;width:2.1px;background:#d4d4d4"></i><i style="left:12.2px;top:148.8px;width:2.1px;background:#d4d4d4"></i><i style="left:12.2px;top:152.7px;width:10.5px;background:#6a9955"></i><i style="left:12.2px;top:154.6px;width:23.1px;background:#569cd6"></i><i style="left:12.2px;top:156.6px;width:37.8px;background:#c586c0"></i><i style="left:16.4px;top:158.5px;width:50.4px;background:#9cdcfe"></i><i style="left:12.2px;top:160.5px;width:2.1px;background:#d4d4d4"></i><i style="left:12.2px;top:164.4px;width:60.9px;background:#ce9178"></i><i style="left:12.2px;top:168.3px;width:12.6px;background:#c586c0"></i><i style="left:12.2px;top:170.2px;width:8.4px;background:#c586c0"></i><i style="left:8.0px;top:172.2px;width:2.1px;background:#d4d4d4"></i><i style="left:16.4px;top:111.0px;width:42.0px;background:#7fb0e0"></i><i style="left:20.6px;top:113.0px;width:36.8px;background:#7fb0e0"></i><i style="left:24.8px;top:114.9px;width:45.1px;background:#7fb0e0"></i><i style="left:29.0px;top:116.8px;width:31.5px;background:#7fb0e0"></i><i style="left:29.0px;top:118.8px;width:42.0px;background:#7fb0e0"></i><i style="left:29.0px;top:120.8px;width:12.6px;background:#7fb0e0"></i><i style="left:29.0px;top:122.7px;width:13.7px;background:#7fb0e0"></i><i style="left:29.0px;top:124.7px;width:6.3px;background:#7fb0e0"></i><i style="left:24.8px;top:126.6px;width:8.4px;background:#7fb0e0"></i><i style="left:29.0px;top:128.6px;width:48.3px;background:#7fb0e0"></i><i style="left:29.0px;top:130.5px;width:6.3px;background:#7fb0e0"></i><i style="left:24.8px;top:132.4px;width:1.1px;background:#7fb0e0"></i><i style="left:20.6px;top:134.4px;width:1.1px;background:#7fb0e0"></i><i style="left:16.4px;top:136.3px;width:1.1px;background:#7fb0e0"></i></div><div style="position:absolute;left:1435px;top:0;width:1px;height:764px;background:#3a3a3a"></div><div style="position:absolute;left:1435px;top:373px;width:23px;height:150px;background:#424242"></div><div style="position:absolute;left:1436px;top:394.3px;width:22px;height:3.6px;background:#7c7c7c"></div></div>
<div style="position:absolute;left:1779px;top:830px;width:42px;height:52px;background:#2d2d2d;border:1.5px solid #c8c8c8;border-right:none;border-radius:9px 0 0 9px"></div>
<svg style="position:absolute;left:1787px;top:846px;" width="22" height="20" viewBox="0 0 22 20" fill="none"><path d="M2 2 L10 10 L2 18 M11 2 L19 10 L11 18" stroke="#c8c8c8" stroke-width="2.2"/></svg>
<div style="position:absolute;left:434.2px;top:324.8px;width:1011.9px;height:554.4px;border:7.2px solid #f63b3b"></div>
<div style="position:absolute;left:360px;top:989px;width:1458px;height:503px;background:#1e1e1e;"></div>
<div style="position:absolute;left:360px;top:989px;width:1458px;height:1px;background:#454545;"></div>
<div style="position:absolute;left:393px;top:1008.30px;height:25px;line-height:25px;font-size:18.2px;color:#969696;white-space:nowrap;">问题</div>
<div style="position:absolute;left:468px;top:1008.30px;height:25px;line-height:25px;font-size:18.2px;color:#969696;white-space:nowrap;">输出</div>
<div style="position:absolute;left:545px;top:1008.30px;height:25px;line-height:25px;font-size:18.2px;color:#969696;white-space:nowrap;">调试控制台</div>
<div style="position:absolute;left:675px;top:1008.30px;height:25px;line-height:25px;font-size:18.2px;color:#e7e7e7;white-space:nowrap;">终端</div>
<div style="position:absolute;left:672px;top:1040px;width:42px;height:1.6px;background:#e7e7e7;"></div>
<svg style="position:absolute;left:1426px;top:1007px;" width="24" height="24" viewBox="0 0 24 24" fill="none"><rect x="1" y="1" width="22" height="22" rx="2" stroke="#cccccc" stroke-width="1.7"/><path d="M8.4 7 L14.6 12.4 L8.4 17.8" stroke="#cccccc" stroke-width="1.8"/></svg>
<div style="position:absolute;left:1458px;top:1007.30px;height:26px;line-height:26px;font-size:18.6px;color:#cccccc;white-space:nowrap;">./demo</div>
<svg style="position:absolute;left:1533px;top:1008px;" width="22" height="22" viewBox="0 0 22 22" fill="none"><path d="M11 0 V22 M0 11 H22" stroke="#cccccc" stroke-width="1.8"/></svg>
<svg style="position:absolute;left:1564px;top:1014px;" width="14" height="10" viewBox="0 0 14 10" fill="none"><path d="M1 1.6 L7 8 L13 1.6" stroke="#cccccc" stroke-width="1.7"/></svg>
<svg style="position:absolute;left:1598px;top:1007px;" width="23" height="23" viewBox="0 0 23 23" fill="none"><rect x="1" y="1" width="21" height="21" rx="2.2" stroke="#cccccc" stroke-width="1.8"/><path d="M11.5 1 V22" stroke="#cccccc" stroke-width="1.8"/></svg>
<svg style="position:absolute;left:1640px;top:1006px;" width="22" height="24" viewBox="0 0 22 24" fill="none"><path d="M1 5.4 H21 M7.4 5 V2.4 Q7.4 1.2 8.6 1.2 H13.4 Q14.6 1.2 14.6 2.4 V5 M3.6 5.6 V20.6 Q3.6 22.6 5.6 22.6 H16.4 Q18.4 22.6 18.4 20.6 V5.6 M8.4 8.6 V19.6 M13.6 8.6 V19.6" stroke="#cccccc" stroke-width="1.8"/></svg>
<svg style="position:absolute;left:1684px;top:1016px;" width="22" height="6" viewBox="0 0 22 6" fill="none"><circle cx="2.6" cy="3" r="2" fill="#cccccc"/><circle cx="10.8" cy="3" r="2" fill="#cccccc"/><circle cx="19" cy="3" r="2" fill="#cccccc"/></svg>
<svg style="position:absolute;left:1728px;top:1012px;" width="19" height="11" viewBox="0 0 19 11" fill="none"><path d="M1 9.6 L9.5 1.6 L18 9.6" stroke="#cccccc" stroke-width="1.8"/></svg>
<svg style="position:absolute;left:1772px;top:1010px;" width="17" height="17" viewBox="0 0 17 17" fill="none"><path d="M1 1 L16 16 M16 1 L1 16" stroke="#cccccc" stroke-width="1.8"/></svg>
<div style="position:absolute;left:1802px;top:1057px;width:5px;height:10px;background:#1a85c9;"></div>
<div style="position:absolute;left:1802px;top:1182px;width:5px;height:20px;background:#6e6e6e;"></div>
<svg style="position:absolute;left:1806px;top:1478px;" width="8" height="6" viewBox="0 0 8 6" fill="none"><path d="M0 0 H8 L4 5 Z" fill="#555"/></svg>
<div class="tl" style="top:1056.90px"><i style="width:33px;color:#23d18b;font-family:'DejaVu Sans',sans-serif;font-size:27px;font-weight:bold;line-height:20px">➜</i><b style="letter-spacing:1.37px;margin-left:0.69px;margin-right:-0.69px;font-weight:bold;color:#29b8db;">c22</b><b style="letter-spacing:2.43px;margin-left:1.22px;margin-right:-1.22px;"> ./demo</b></div>
<div class="tl" style="top:1083.90px">请输入商品名称（输入<b style="letter-spacing:4.61px;margin-left:2.31px;margin-right:-2.31px;">'quit'</b>计算总价并退出）：苹果</div>
<div class="tl" style="top:1110.90px">请输入购买数量：<b style="letter-spacing:1.00px;margin-left:0.50px;margin-right:-0.50px;">5</b></div>
<div class="tl" style="top:1137.90px">请输入商品名称（输入<b style="letter-spacing:4.61px;margin-left:2.31px;margin-right:-2.31px;">'quit'</b>计算总价并退出）：<b style="letter-spacing:3.22px;margin-left:1.61px;margin-right:-1.61px;">quit</b></div>
<div class="tl" style="top:1164.90px">购物车总金额为：<b style="letter-spacing:2.25px;margin-left:1.12px;margin-right:-1.12px;">17.5</b>元</div>
<div class="tl" style="top:1191.90px"><i style="width:33px;color:#23d18b;font-family:'DejaVu Sans',sans-serif;font-size:27px;font-weight:bold;line-height:20px">➜</i><b style="letter-spacing:1.37px;margin-left:0.69px;margin-right:-0.69px;font-weight:bold;color:#29b8db;">c22</b><b style="letter-spacing:2.43px;margin-left:1.22px;margin-right:-1.22px;"> ./demo</b></div>
<div class="tl" style="top:1218.90px">请输入商品名称（输入<b style="letter-spacing:4.61px;margin-left:2.31px;margin-right:-2.31px;">'quit'</b>计算总价并退出）：<b style="letter-spacing:1.00px;margin-left:0.50px;margin-right:-0.50px;">1</b></div>
<div class="tl" style="top:1245.90px">请输入购买数量：<b style="letter-spacing:1.00px;margin-left:0.50px;margin-right:-0.50px;">5</b></div>
<div class="tl" style="top:1272.90px">商品不存在，请重新输入：</div>
<div class="tl" style="top:1299.90px">请输入商品名称（输入<b style="letter-spacing:4.61px;margin-left:2.31px;margin-right:-2.31px;">'quit'</b>计算总价并退出）：<i style="width:10.5px;height:25px;border:1.5px solid #cccccc;vertical-align:-5px;margin-left:-1px"></i></div>
<div style="position:absolute;left:371px;top:1063px;width:13.5px;height:13.5px;border-radius:50%;background:#2b86bd"></div>
<div style="position:absolute;left:371px;top:1198.5px;width:13.5px;height:13.5px;border-radius:50%;border:2.2px solid #6e6e6e"></div>
<div style="position:absolute;left:1818px;top:131px;width:2.5px;height:1397px;background:#333333;"></div>
<div style="position:absolute;left:1820px;top:131px;width:740px;height:1397px;background:#3e4041;"></div>
<svg style="position:absolute;left:1853px;top:139.8px;" width="29" height="26.2" viewBox="0 0 31 28" fill="none"><path d="M3.4 26.4 H27.6 Q29.6 22.6 29.6 15.4 A14.1 14.1 0 0 0 1.4 15.4 Q1.4 22.6 3.4 26.4 Z" stroke="#d0d0d0" stroke-width="2.3" stroke-linejoin="round"/><path d="M15.5 17.6 L21.6 10.4" stroke="#d0d0d0" stroke-width="2.6" stroke-linecap="round"/><path d="M15.5 4.6 V7 M6 15.6 H8.4 M22.6 15.6 H25 M8.6 8.6 L10.4 10.4" stroke="#d0d0d0" stroke-width="2.2" stroke-linecap="round"/></svg>
<div style="position:absolute;left:2028px;top:142.70px;height:30px;line-height:30px;font-size:21.45px;color:#d0d0d0;white-space:nowrap;">您的工作区正在分享中</div>
<svg style="position:absolute;left:2396px;top:145.4px;" width="19" height="20.8" viewBox="0 0 21 23" fill="none"><circle cx="16.6" cy="4.2" r="3" stroke="#d0d0d0" stroke-width="2"/><circle cx="4.4" cy="11.5" r="3" stroke="#d0d0d0" stroke-width="2"/><circle cx="16.6" cy="18.8" r="3" stroke="#d0d0d0" stroke-width="2"/><path d="M7 10 L14 5.6 M7 13 L14 17.4" stroke="#d0d0d0" stroke-width="2"/></svg>
<div style="position:absolute;left:2426px;top:143.40px;height:28px;line-height:28px;font-size:19.8px;color:#d0d0d0;white-space:nowrap;">分享</div>
<div style="position:absolute;left:2488px;top:135px;width:40px;height:40px;border-radius:50%;background:#3d98d9;color:#fff;font-size:21px;line-height:43px;text-align:center">a</div>
<div style="position:absolute;left:1820px;top:180px;width:740px;height:1.5px;background:#2e3032;"></div>
<svg style="position:absolute;left:1854px;top:198px;" width="19" height="14" viewBox="0 0 19 14" fill="none"><path d="M1 1.4 L9.5 12.6 L18 1.4" stroke="#d0d0d0" stroke-width="2.1"/></svg>
<div style="position:absolute;left:1890px;top:192.50px;height:30px;line-height:30px;font-size:21.45px;color:#d0d0d0;white-space:nowrap;">智能助手</div>
<svg style="position:absolute;left:2415px;top:197px;" width="18" height="18" viewBox="0 0 18 18" fill="none"><path d="M9 0.5 V17.5 M0.5 9 H17.5" stroke="#d0d0d0" stroke-width="2"/></svg>
<div style="position:absolute;left:2442px;top:192.50px;height:30px;line-height:30px;font-size:21.45px;color:#d0d0d0;white-space:nowrap;">新建对话</div>
<div style="position:absolute;left:1820px;top:230px;width:740px;height:1009px;background:#2b2b2b;"></div>
<div style="position:absolute;left:1930px;top:230px;width:598px;height:921px;background:#3e4041;"></div>
<div style="position:absolute;left:1950px;top:230px;width:558px;height:30px;background:#2b2b2b;"></div>
<div style="position:absolute;left:1950px;top:247px;width:243px;height:13px;background:#4e4e4e;border-radius:7px"></div>
<div class="ct" style="left:1950px;top:285.3px">相较于原来的代码，它的执行效率并未提高，但是逻辑</div>
<div class="ct" style="left:1950px;top:317.4px">更为清晰。具体修改如下：</div>
<div class="ct" style="left:2016px;top:351.1px">将<code>found</code>初始化为<code style="margin-right:0">false</code>，该标志用于判断是否</div>
<div class="ct" style="left:2016px;top:385.3px">找到了商品名称。</div>
<div class="ct" style="left:2016px;top:419.2px">在<code>if</code>成功匹配了商品名称后，分别判断购物车</div>
<div class="ct" style="left:2016px;top:454.0px">中商品数量是否小于等于库存。</div>
<div class="ct" style="left:2016px;top:487.3px">如果库存充足，则将该商品加入购物车，并将<code style="margin-right:0">f</code></div>
<div class="ct" style="left:2016px;top:522.2px"><code style="margin-left:0">ound</code>设置为<code style="margin-right:0">true</code>。</div>
<div class="ct" style="left:2016px;top:556.7px">如果库存不足，则在控制台输出错误提示信息。</div>
<div class="ct" style="left:2016px;top:590.3px">如果未找到商品名称，则在控制台输出找不到商</div>
<div class="ct" style="left:2016px;top:623.3px">品的错误提示信息。</div>
<div class="ct" style="left:1950px;top:679.5px">上述代码通过遍历商品列表，先查找用户输入的商品名</div>
<div class="ct" style="left:1950px;top:712.5px">称是否存在，若存在则判断用户输入的商品数量是否小</div>
<div class="ct" style="left:1950px;top:745.3px">于等于库存，并根据判断结果执行相应的操作，如果库</div>
<div class="ct" style="left:1950px;top:778.3px">存不足则在控制台输出错误信息，如此运行直到遍历完</div>
<div class="ct" style="left:1950px;top:811.9px">商品列表。</div>
<div class="ct" style="left:1950px;top:844.3px">修改后的代码逻辑清晰，更易于理解和维护。同时，为</div>
<div class="ct" style="left:1950px;top:877.0px">了更好地防止代码中出现错误的情况，我们可以添加注</div>
<div class="ct" style="left:1950px;top:910.0px">释来讲解代码的作用和每一个变量的含义等。例如：</div>
<div style="position:absolute;left:1950px;top:964px;width:558px;height:187px;background:#2b2b2b;overflow:hidden"><div style="position:absolute;left:23px;top:29.50px;height:32px;line-height:32px;font-size:23.1px;color:#9a9a9a;white-space:nowrap;">cpp</div><div style="position:absolute;left:433px;top:23px;width:41px;height:41px;background:#414345"></div><div style="position:absolute;left:494px;top:23px;width:41px;height:41px;background:#414345"></div><svg style="position:absolute;left:442px;top:31px;" width="23" height="25" viewBox="0 0 23 25" fill="none"><path d="M5 18.6 V3.6 Q5 1.6 7 1.6 H13.6 L18 6 V18.6 Q18 20.6 16 20.6 H7 Q5 20.6 5 18.6 Z" stroke="#cfcfcf" stroke-width="2"/><path d="M8 11 H12 M8 15 H15" stroke="#cfcfcf" stroke-width="2"/><path d="M8.6 23.6 H18.6 Q21.4 23.6 21.4 20.8 V8" stroke="#8f8f8f" stroke-width="2"/></svg><svg style="position:absolute;left:503px;top:32px;" width="26" height="22" viewBox="0 0 26 22" fill="none"><path d="M1 2.6 H12 M1 11 H17 M1 19.4 H21" stroke="#cfcfcf" stroke-width="2.1"/><path d="M25 7 H15.6 M19.6 2.6 L15.2 7 L19.6 11.4" stroke="#cfcfcf" stroke-width="2.1"/></svg><div class="cb" style="top:88px;color:#808080">// <span class="cj">函数名：</span>updateCartItemQty</div><div class="cb" style="top:121px;color:#808080">// <span class="cj">作用：将购物车中商品的数量更改为用户输入数量</span></div><div class="cb" style="top:153.5px;color:#a9b7c6"><span style="color:#cc7832">void</span> updateCartItemQty(Product cart[], <span style="color:#cc7832">int</span> index</div></div>
<div style="position:absolute;left:2548px;top:1026px;width:12px;height:62px;background:#4c4c4c;border-radius:6px"></div>
<div style="position:absolute;left:1839px;top:1174px;width:162px;height:45px;background:#3f4143;border-radius:7px"></div>
<div style="position:absolute;left:2014px;top:1174px;width:162px;height:45px;background:#3f4143;border-radius:7px"></div>
<div style="position:absolute;left:2196px;top:1174px;width:155px;height:45px;background:#3f4143;border-radius:7px"></div>
<div style="position:absolute;left:2368px;top:1174px;width:158px;height:45px;background:#3f4143;border-radius:7px"></div>
<svg style="position:absolute;left:1862px;top:1184px;" width="25.4" height="25" viewBox="0 0 25 25" fill="none"><path d="M5 7.2 A7.5 6.6 0 0 1 20 7.2 M6.4 7.4 V17 Q6.4 23.8 12.5 23.8 Q18.6 23.8 18.6 17 V7.4 M0 13.6 H25 M12.5 13.6 V23.8 M1.4 5 L6 9.4 M23.6 5 L19 9.4 M1.4 23.8 L6.4 19.4 M23.6 23.8 L18.6 19.4" stroke="#ececec" stroke-width="2.3"/></svg>
<div style="position:absolute;left:1899px;top:1184.80px;height:28px;line-height:28px;font-size:20.2px;color:#c9c9c9;white-space:nowrap;">排查问题</div>
<svg style="position:absolute;left:2035px;top:1184.4px;" width="29.6" height="25" viewBox="0 0 31 27" fill="none"><rect x="1.4" y="1.4" width="28.2" height="24.2" rx="3.6" stroke="#e6e6e6" stroke-width="2.4"/><path d="M10.6 9.4 L7.2 13.5 L10.6 17.6 M20.4 9.4 L23.8 13.5 L20.4 17.6 M17 8.4 L14 18.6" stroke="#e6e6e6" stroke-width="2"/></svg>
<div style="position:absolute;left:2074px;top:1184.80px;height:28px;line-height:28px;font-size:20.2px;color:#c9c9c9;white-space:nowrap;">生成代码</div>
<svg style="position:absolute;left:2209px;top:1181px;" width="31" height="31" viewBox="0 0 31 31" fill="none"><circle cx="15.5" cy="15.5" r="13.6" stroke="#e6e6e6" stroke-width="2.5"/><path d="M9 15.6 L14 20.4 L22.4 11.4" stroke="#e6e6e6" stroke-width="2.5" stroke-linecap="round" stroke-linejoin="round"/></svg>
<div style="position:absolute;left:2249px;top:1184.80px;height:28px;line-height:28px;font-size:20.2px;color:#c9c9c9;white-space:nowrap;">优化代码</div>
<svg style="position:absolute;left:2386px;top:1183px;" width="27" height="27" viewBox="0 0 27 27" fill="none"><rect x="1.4" y="1.4" width="10" height="10" rx="4.4" stroke="#e6e6e6" stroke-width="2.4"/><rect x="15.6" y="1.4" width="10" height="10" rx="4.4" stroke="#e6e6e6" stroke-width="2.4"/><rect x="1.4" y="15.6" width="10" height="10" rx="4.4" stroke="#e6e6e6" stroke-width="2.4"/><rect x="15.6" y="15.6" width="10" height="10" rx="4.4" stroke="#e6e6e6" stroke-width="2.4"/></svg>
<div style="position:absolute;left:2424px;top:1184.80px;height:28px;line-height:28px;font-size:20.2px;color:#c9c9c9;white-space:nowrap;">查看更多</div>
<div style="position:absolute;left:1839px;top:1257px;width:702px;height:52px;background:#1f2023;border-radius:9px"></div>
<div style="position:absolute;left:1858px;top:1267.50px;height:32px;line-height:32px;font-size:23.1px;color:#686868;white-space:nowrap;letter-spacing:-0.2px">Enter 发送，Ctrl+Enter 换行</div>
<svg style="position:absolute;left:2484px;top:1269px;" width="34" height="30" viewBox="0 0 34 30" fill="none"><path d="M1 9.6 L33 1 L27.6 27.6 L17 21 L12.6 28.6 L11 17.6 Z" fill="#4c4c4e"/><path d="M11 17.6 L33 1 L17 21" stroke="#232427" stroke-width="1.5" fill="none"/></svg>
<div style="position:absolute;left:1820px;top:1330px;width:740px;height:1.5px;background:#303234;"></div>
<div style="position:absolute;left:1820px;top:1379.5px;width:740px;height:1.5px;background:#303234;"></div>
<div style="position:absolute;left:1820px;top:1429px;width:740px;height:1.5px;background:#303234;"></div>
<div style="position:absolute;left:1820px;top:1478.5px;width:740px;height:1.5px;background:#303234;"></div>
<svg style="position:absolute;left:1858px;top:1346.5px;" width="13" height="20" viewBox="0 0 13 20" fill="none"><path d="M1.6 1.6 L11 10 L1.6 18.4" stroke="#d0d0d0" stroke-width="2.1"/></svg>
<div style="position:absolute;left:1890px;top:1341.50px;height:30px;line-height:30px;font-size:21.45px;color:#d0d0d0;white-space:nowrap;">文件管理</div>
<svg style="position:absolute;left:1858px;top:1395.5px;" width="13" height="20" viewBox="0 0 13 20" fill="none"><path d="M1.6 1.6 L11 10 L1.6 18.4" stroke="#d0d0d0" stroke-width="2.1"/></svg>
<div style="position:absolute;left:1890px;top:1390.50px;height:30px;line-height:30px;font-size:21.45px;color:#d0d0d0;white-space:nowrap;">端口映射</div>
<svg style="position:absolute;left:1858px;top:1445px;" width="13" height="20" viewBox="0 0 13 20" fill="none"><path d="M1.6 1.6 L11 10 L1.6 18.4" stroke="#d0d0d0" stroke-width="2.1"/></svg>
<div style="position:absolute;left:1890px;top:1440.00px;height:30px;line-height:30px;font-size:21.45px;color:#d0d0d0;white-space:nowrap;">代码仓库</div>
<svg style="position:absolute;left:1858px;top:1494.5px;" width="13" height="20" viewBox="0 0 13 20" fill="none"><path d="M1.6 1.6 L11 10 L1.6 18.4" stroke="#d0d0d0" stroke-width="2.1"/></svg>
<div style="position:absolute;left:1890px;top:1489.50px;height:30px;line-height:30px;font-size:21.45px;color:#d0d0d0;white-space:nowrap;">服务列表</div>
<svg style="position:absolute;left:2436px;top:1393px;" width="25" height="25" viewBox="0 0 25 25" fill="none"><rect x="4.6" y="9.6" width="15.8" height="13" rx="1.6" stroke="#d0d0d0" stroke-width="2.2"/><path d="M8 9.6 V6.4 A4.5 4.5 0 0 1 17 6.4 V9.6 M1.6 2.6 L23.6 23.6" stroke="#d0d0d0" stroke-width="2.2"/></svg>
<div style="position:absolute;left:2470px;top:1391.00px;height:30px;line-height:30px;font-size:21.45px;color:#d0d0d0;white-space:nowrap;letter-spacing:-1.5px">HTTP</div>
<svg style="position:absolute;left:2445px;top:1441px;" width="24" height="26" viewBox="0 0 24 26" fill="none"><path d="M3 20 V2.6 H21 V17.6 H6 Q3 17.6 3 20.6 Q3 23.6 6 23.6 H8 M14 23.6 H21 V17.6 M8 19.6 V25.6 L11 23 L14 25.6 V19.6 M7.6 6 H10 M7.6 10 H10 M7.6 14 H10" stroke="#d0d0d0" stroke-width="2.2"/></svg>
<div style="position:absolute;left:2476px;top:1440.00px;height:30px;line-height:30px;font-size:21.45px;color:#d0d0d0;white-space:nowrap;">克隆</div>
<div style="position:absolute;left:2212px;top:1458.50px;height:35px;line-height:35px;font-size:24.7px;color:#ffffff;white-space:nowrap;text-shadow:0 0 3px rgba(0,0,0,.9),1px 1px 2px rgba(0,0,0,.8)">掘金技术社区 @ 是但求其发</div>
<div style="position:absolute;left:1908px;top:276.7px;width:647.3px;height:674.2px;border:7.3px solid #f63b3b"></div>
<div style="position:absolute;left:2189px;top:1166.8px;width:179.1px;height:66.3px;border:7.3px solid #f63b3b"></div>
</body></html>
